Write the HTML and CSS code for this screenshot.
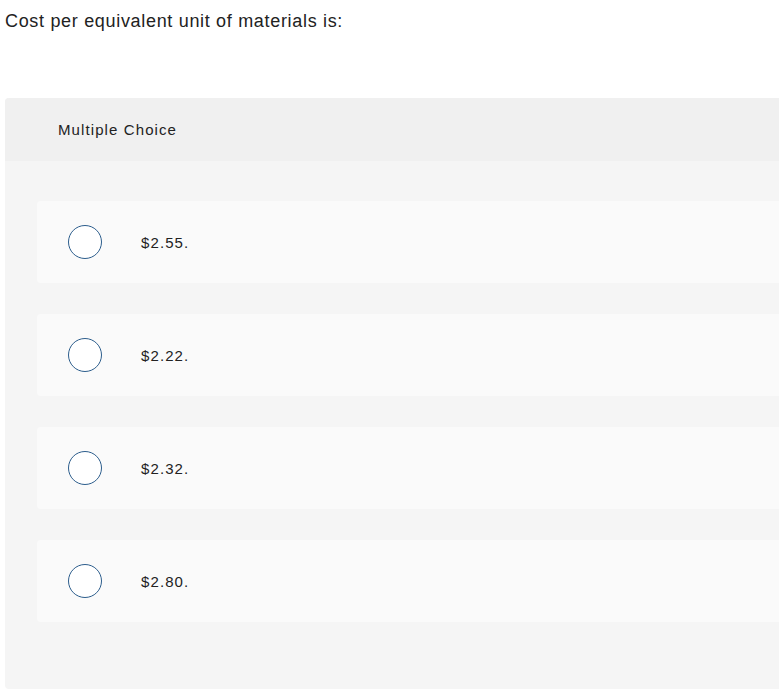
FILE: index.html
```html
<!DOCTYPE html>
<html>
<head>
<meta charset="utf-8">
<link rel="stylesheet" href="styles.css">
</head>
<body>
<div class="page">
  <p class="prompt">Cost per equivalent unit of materials is:</p>
  <div class="panel">
    <div class="panel-head">Multiple Choice</div>
    <div class="panel-body">
      <div class="option"><span class="radio"></span><span class="label">$2.55.</span></div>
      <div class="option"><span class="radio"></span><span class="label">$2.22.</span></div>
      <div class="option"><span class="radio"></span><span class="label">$2.32.</span></div>
      <div class="option"><span class="radio"></span><span class="label">$2.80.</span></div>
    </div>
  </div>
</div>
</body>
</html>
```
FILE: styles.css
```css
html, body {
  margin: 0;
  padding: 0;
  background: #ffffff;
  overflow: hidden;
}
.page {
  width: 779px;
  height: 690px;
  overflow: hidden;
  padding-left: 5px;
  box-sizing: border-box;
  font-family: "Liberation Sans", Arial, sans-serif;
  color: #222222;
}
.prompt {
  margin: 0;
  padding-top: 10px;
  font-size: 18px;
  line-height: 22px;
  letter-spacing: 0.68px;
}
.panel {
  margin-top: 66px;
  width: 820px;
  height: 591px;
  background: #f5f5f5;
  border-radius: 4px 0 0 4px;
  overflow: hidden;
}
.panel-head {
  height: 63px;
  background: #f0f0f0;
  display: flex;
  align-items: center;
  padding-left: 53px;
  font-size: 15px;
  letter-spacing: 1.1px;
}
.panel-body {
  padding: 40px 0 0 32px;
  display: flex;
  flex-direction: column;
  gap: 31px;
}
.option {
  height: 82px;
  background: #fafafa;
  border-radius: 4px 0 0 4px;
  display: flex;
  align-items: center;
}
.radio {
  width: 32px;
  height: 32px;
  border: 1.7px solid #2c5d8c;
  border-radius: 50%;
  background: #ffffff;
  margin-left: 31px;
  flex: none;
}
.label {
  margin-left: 39px;
  font-size: 15px;
  letter-spacing: 1.1px;
}
```
